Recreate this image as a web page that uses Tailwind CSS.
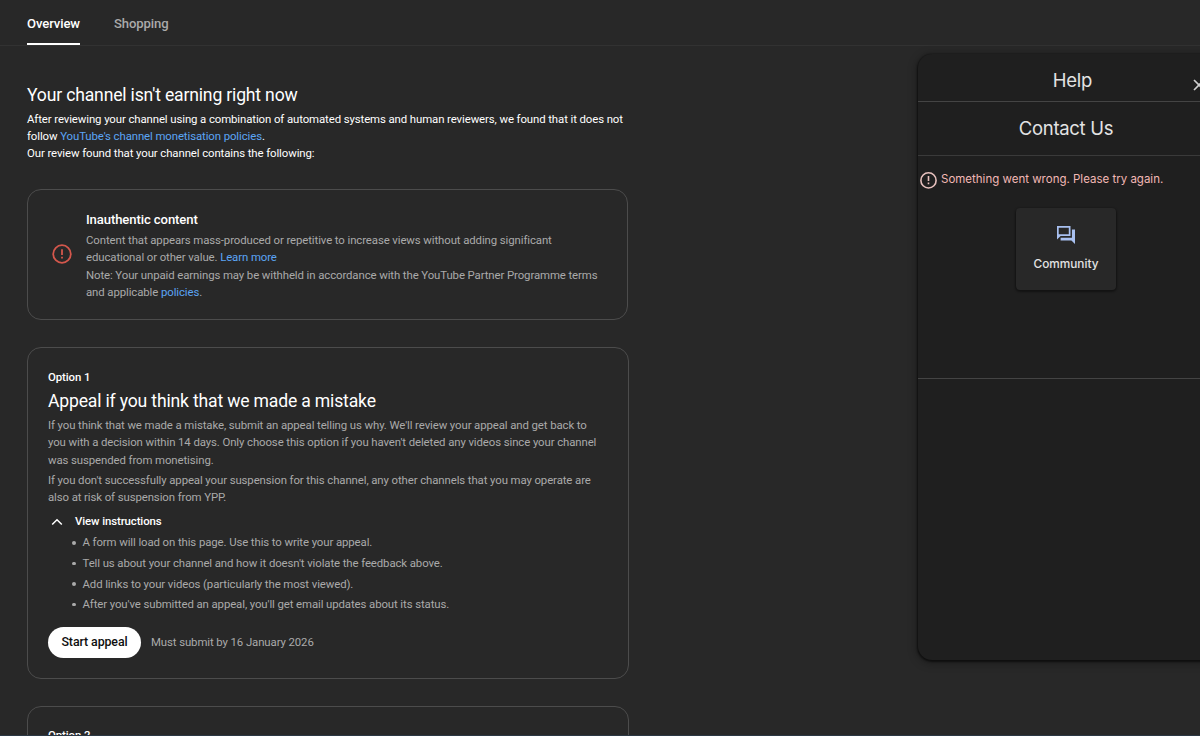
<!DOCTYPE html>
<html lang="en-GB">
<head>
<meta charset="utf-8">
<title>Channel monetisation</title>
<script src="https://cdn.jsdelivr.net/npm/@tailwindcss/browser@4"></script>
</head>
<body class="bg-[#282828]">
<div class="relative flex h-[736px] w-[1200px] flex-col overflow-hidden bg-[#282828] font-['Roboto',sans-serif] text-[11.4px] leading-[17.2px] tracking-[-0.1px] text-[#aaaaaa]">
  <nav class="flex h-[46px] shrink-0 items-start gap-[34px] border-b border-[#323232] pl-[27px] text-[13.1px] font-medium">
    <div class="flex h-[45px] w-[53px] flex-col justify-between border-b-2 border-white pt-[15px] whitespace-nowrap text-white"><span>Overview</span></div>
    <div class="pt-[15px] whitespace-nowrap">Shopping</div>
  </nav>

  <div class="flex min-h-0 grow">
    <main class="w-[918px] shrink-0 pl-[27px] whitespace-nowrap">
      <h1 class="mt-[36px] h-[26px] text-[17.6px] leading-[26px] tracking-[-0.18px] text-white">Your channel isn't earning right now</h1>
      <div class="mt-[3px] h-[52px] text-white">
        <p>After reviewing your channel using a combination of automated systems and human reviewers, we found that it does not<br>follow <a class="text-[#5ba5f5]">YouTube's channel monetisation policies</a>.</p>
        <p>Our review found that your channel contains the following:</p>
      </div>

      <section class="mt-[26px] flex h-[131px] w-[601px] items-center rounded-[14px] border border-[#4c4c4c] pl-[24px]">
        <svg class="size-[21px] shrink-0" viewBox="0 0 21 21" fill="none" stroke="#d4574c"><circle cx="10" cy="10" r="8.800" stroke-width="1.800"/><path d="M10 5.200v5.900M10 12.800v1.800" stroke-width="1.800"/></svg>
        <div class="ml-[13px] pt-[3px]">
          <h2 class="mb-[4px] text-[13.1px] leading-[17px] font-medium text-white">Inauthentic content</h2>
          <p>Content that appears mass-produced or repetitive to increase views without adding significant<br>educational or other value. <a class="text-[#5ba5f5]">Learn more</a></p>
          <p>Note: Your unpaid earnings may be withheld in accordance with the YouTube Partner Programme terms<br>and applicable <a class="text-[#5ba5f5]">policies</a>.</p>
        </div>
      </section>

      <section class="mt-[27px] h-[332px] w-[602px] rounded-[14px] border border-[#4c4c4c] px-[20px] pt-[21px]">
        <div class="font-medium text-white">Option 1</div>
        <h2 class="mt-[3px] text-[17.6px] leading-[24px] tracking-[-0.18px] text-white">Appeal if you think that we made a mistake</h2>
        <p class="mt-[4px]">If you think that we made a mistake, submit an appeal telling us why. We'll review your appeal and get back to<br>you with a decision within 14 days. Only choose this option if you haven't deleted any videos since your channel<br>was suspended from monetising.</p>
        <p class="mt-[3px]">If you don't successfully appeal your suspension for this channel, any other channels that you may operate are<br>also at risk of suspension from YPP.</p>
        <div class="mt-[7px] flex items-center font-medium text-white">
          <svg class="ml-[3px] h-[8px] w-[12px]" viewBox="0 0 12 8" fill="none" stroke="#fff" stroke-width="1.5"><path d="M1.2 6.500 6 1.700l4.800 4.800"/></svg>
          <span class="ml-[12px]">View instructions</span>
        </div>
        <ul class="mt-[2px] leading-[20.65px]">
          <li class="flex items-center gap-[7px] pl-[24px]"><i class="size-[3.500px] rounded-full bg-[#aaaaaa]"></i><span>A form will load on this page. Use this to write your appeal.</span></li>
          <li class="flex items-center gap-[7px] pl-[24px]"><i class="size-[3.500px] rounded-full bg-[#aaaaaa]"></i><span>Tell us about your channel and how it doesn't violate the feedback above.</span></li>
          <li class="flex items-center gap-[7px] pl-[24px]"><i class="size-[3.500px] rounded-full bg-[#aaaaaa]"></i><span>Add links to your videos (particularly the most viewed).</span></li>
          <li class="flex items-center gap-[7px] pl-[24px]"><i class="size-[3.500px] rounded-full bg-[#aaaaaa]"></i><span>After you've submitted an appeal, you'll get email updates about its status.</span></li>
        </ul>
        <div class="mt-[11.500px] flex items-center gap-[10px]">
          <button class="h-[31px] w-[93px] rounded-full bg-white text-[12.4px] font-medium text-[#0f0f0f]">Start appeal</button>
          <span class="pt-[1px]">Must submit by 16 January 2026</span>
        </div>
      </section>

      <section class="mt-[27px] h-[200px] w-[602px] rounded-[14px] border border-[#4c4c4c] px-[20px] pt-[20px]">
        <div class="font-medium text-white">Option 2</div>
      </section>
    </main>

    <aside class="mt-[8px] h-[606px] w-[309px] shrink-0 rounded-[14px] bg-[#1f1f1f] font-['Inter',sans-serif] tracking-normal whitespace-nowrap shadow-[0_1px_2px_1px_rgba(0,0,0,0.55),0_2px_8px_2px_rgba(0,0,0,0.25)]">
      <header class="flex h-[48px] items-center border-b border-[#444444] pt-[7px] text-[#e3e3e3]">
        <div class="w-[309px] shrink-0 text-center text-[18.500px] tracking-[-0.25px]">Help</div>
        <svg class="-ml-[34px] mt-[7px] size-[12px] shrink-0" viewBox="0 0 12 12" fill="none" stroke="#d0d0d0" stroke-width="1.600"><path d="m1 1 10 10M11 1 1 11"/></svg>
      </header>
      <div class="w-[296px]">
        <div class="flex h-[54px] items-center justify-center border-b border-[#3a3a3a] text-[18.500px] tracking-[-0.300px] text-[#e3e3e3]">Contact Us</div>
        <div class="flex h-[48px] items-center gap-[4px] pl-[2px] text-[#f2b8b5]">
          <svg class="size-[17px] shrink-0" viewBox="0 0 17 17" fill="none" stroke="#e6c0bd" stroke-width="1.600"><circle cx="8.500" cy="8.400" r="7.600"/><path d="M8.500 4v5M8.500 10.500v1.700"/></svg>
          <span class="text-[11.5px]">Something went wrong. Please try again.</span>
        </div>
      </div>
      <div class="h-[175px] border-b border-[#444444]">
        <div class="flex w-[296px] justify-center pt-[4px]">
          <div class="flex h-[82px] w-[100px] flex-col items-center rounded-[4px] bg-[#282828] pt-[18px] shadow-[0_1px_2px_1px_rgba(0,0,0,0.4)]">
            <svg class="size-[18px]" viewBox="0 0 20 20" fill="#a8c0f0"><path fill-rule="evenodd" d="M0 0h15v11H4L0 15zM1.900 1.900v7.300h11.200V1.900z"/><path d="M16.600 4H20v16l-4-4H4v-3h12.600z"/></svg>
            <span class="mt-[12px] text-[11.8px] font-medium text-[#e3e3e3]">Community</span>
          </div>
        </div>
      </div>
    </aside>
  </div>
  <div class="absolute inset-x-0 bottom-0 h-[1px] bg-[#2c3844]"></div>
</div>
</body>
</html>
